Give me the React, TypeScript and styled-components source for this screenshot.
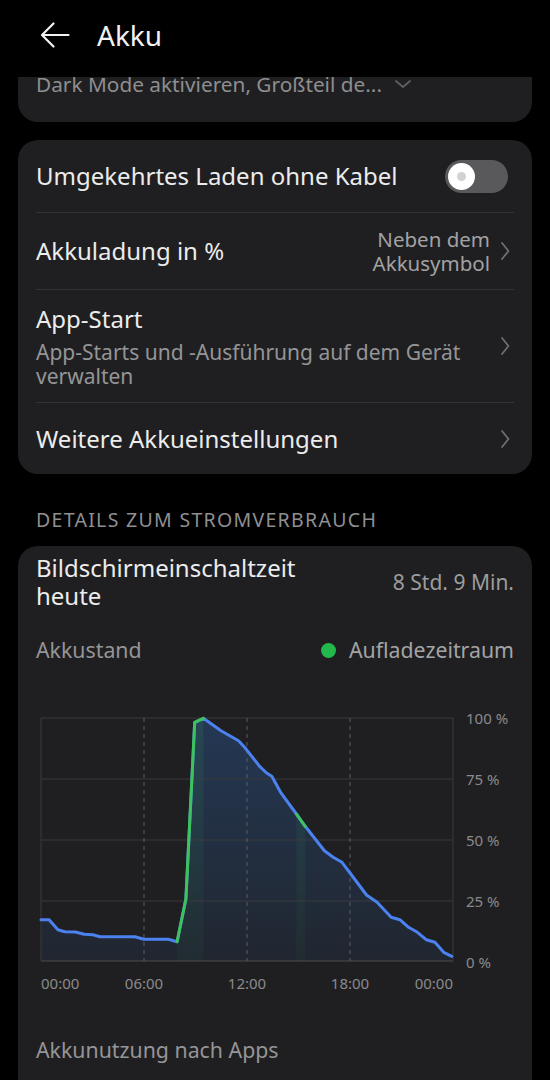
import React from "react";
import styled, { createGlobalStyle } from "styled-components";

const GlobalStyle = createGlobalStyle`
  html, body {
    margin: 0;
    padding: 0;
    background: #000;
  }
  body {
    font-family: "Noto Sans", "Liberation Sans", sans-serif;
    color: #e8e8e8;
    -webkit-font-smoothing: antialiased;
  }
  * {
    box-sizing: border-box;
  }
`;

const Page = styled.div`
  width: 550px;
  height: 1080px;
  overflow: hidden;
  background: #000;
`;

const Header = styled.header`
  height: 77px;
  display: flex;
  align-items: center;
  gap: 27px;
  padding: 0 0 7px 40px;
  background: #000;
`;

const HeaderTitle = styled.h1`
  margin: 0;
  font-size: 28px;
  font-weight: 400;
  color: #f2f2f2;
  line-height: 36px;
`;

const Content = styled.main`
  padding: 0 18px;
`;

const CollapsedCard = styled.div`
  height: 45px;
  overflow: hidden;
  background: #1f1f21;
  border-radius: 0 0 20px 20px;
  padding: 0 18px;
`;

const CollapsedLine = styled.div`
  margin-top: -7px;
  display: flex;
  align-items: center;
  gap: 12px;
  height: 28px;
  font-size: 20.8px;
  color: #8e8e90;
`;

const Card = styled.section<{ $top?: number }>`
  margin-top: ${(p) => p.$top ?? 18}px;
  background: #1f1f21;
  border-radius: 20px;
  padding: 0 18px;
`;

const Row = styled.div`
  display: flex;
  align-items: center;
  gap: 10px;
  min-height: 72px;
  padding: 14px 0;

  & + & {
    border-top: 1px solid #333335;
  }
`;

const RowMain = styled.div`
  flex: 1;
  display: flex;
  flex-direction: column;
  gap: 6px;
  min-width: 0;
`;

const RowTitle = styled.div`
  font-size: 24px;
  line-height: 30px;
  color: #ececec;
`;

const RowSub = styled.div`
  font-size: 21px;
  line-height: 24px;
  color: #959597;
`;

const RowValue = styled.div`
  font-size: 20.5px;
  line-height: 24px;
  color: #a2a2a4;
  text-align: right;
`;

const Toggle = styled.div`
  width: 63px;
  height: 33px;
  border-radius: 17px;
  background: #59595b;
  padding: 3px;
  flex-shrink: 0;
  margin-right: 6px;
`;

const Knob = styled.div`
  width: 27px;
  height: 27px;
  border-radius: 50%;
  background: #fff;
  display: flex;
  align-items: center;
  justify-content: center;

  &::after {
    content: "";
    width: 9px;
    height: 9px;
    border-radius: 50%;
    background: #d2d2d2;
  }
`;

const Chevron = styled.svg`
  flex-shrink: 0;
  margin-right: 4px;
`;

const SectionTitle = styled.h2`
  margin: 33px 18px 13px;
  font-size: 19.5px;
  font-weight: 400;
  line-height: 26px;
  color: #8f8f91;
  letter-spacing: 1.3px;
`;

const StatRow = styled.div`
  display: flex;
  align-items: center;
  justify-content: space-between;
  padding-top: 8px;
`;

const StatTitle = styled.div`
  max-width: 300px;
  font-size: 24px;
  line-height: 28px;
  color: #ececec;
`;

const StatValue = styled.div`
  font-size: 21px;
  color: #9c9c9e;
`;

const LegendRow = styled.div`
  display: flex;
  align-items: center;
  justify-content: space-between;
  margin-top: 26px;
  font-size: 21.3px;
  line-height: 28px;
  color: #959597;
`;

const Legend = styled.div`
  display: flex;
  align-items: center;
  gap: 13px;
  color: #a4a4a6;
`;

const Dot = styled.span`
  width: 15px;
  height: 15px;
  border-radius: 50%;
  background: #22b84c;
`;

const ChartSvg = styled.svg`
  display: block;
  margin-top: 35px;
  overflow: visible;
`;

const FooterLabel = styled.div`
  margin-top: 37px;
  padding-bottom: 40px;
  font-size: 21.3px;
  line-height: 28px;
  color: #959597;
`;

const BackArrow = () => (
  <svg width="30" height="26" viewBox="0 0 30 26" fill="none">
    <path
      d="M28.5 13H2M13.5 1.5L2 13l11.5 11.5"
      stroke="#f2f2f2"
      strokeWidth="2.2"
      strokeLinecap="round"
      strokeLinejoin="round"
    />
  </svg>
);

const ChevronRight = () => (
  <Chevron width="10" height="20" viewBox="0 0 10 20" fill="none">
    <path d="M2 2l6.5 8L2 18" stroke="#6f6f71" strokeWidth="1.8" strokeLinecap="round" strokeLinejoin="round" />
  </Chevron>
);

const ChevronDown = () => (
  <svg width="18" height="12" viewBox="0 0 18 12" fill="none">
    <path d="M2 3l7 6 7-6" stroke="#5f5f61" strokeWidth="1.8" strokeLinecap="round" strokeLinejoin="round" />
  </svg>
);

// chart points in svg coords (plot 5..417 x 19..262)
const points: [number, number][] = [
  [5, 220.7], [13.1, 220.7], [21.9, 230.7], [28.9, 232.7], [39.4, 233], [48.2, 235.3],
  [56.9, 235.7], [64, 237.7], [99, 237.7], [107.8, 240.3], [132.4, 240.3], [141.1, 242.7],
  [149.9, 200], [158.7, 23.3], [167.4, 19.3], [185, 31.7], [202.5, 41.7], [209.5, 49.3],
  [223.6, 67.3], [230.6, 74], [235.8, 77.3], [244.6, 93.3], [260.4, 115], [269.2, 127.3],
  [288.4, 151.7], [297.2, 158.3], [306, 163.3], [314.8, 175], [330.5, 196], [341.1, 203.3],
  [355.1, 218.3], [363.9, 220.7], [372.6, 228.3], [381.4, 233.3], [390.2, 240.7],
  [398.9, 243.3], [407.7, 253.3], [415.8, 257.3],
];

const charging: [number, number][] = [
  [11, 14],
  [22, 23],
];

const toPath = (pts: [number, number][]) =>
  pts.map(([x, y], i) => `${i ? "L" : "M"}${x} ${y}`).join(" ");

const BatteryChart = () => {
  const areaPath = `${toPath(points)} L415.8 262 L5 262 Z`;
  const yLabels = ["100 %", "75 %", "50 %", "25 %", "0 %"];
  const gridY = [19, 80, 141, 202];
  const xLabels = [
    { t: "00:00", x: 5, a: "start" },
    { t: "06:00", x: 108, a: "middle" },
    { t: "12:00", x: 211, a: "middle" },
    { t: "18:00", x: 314, a: "middle" },
    { t: "00:00", x: 417, a: "end" },
  ];

  return (
    <ChartSvg width="478" height="300" viewBox="0 0 478 300">
      <defs>
        <linearGradient id="areaFill" x1="0" y1="0" x2="0" y2="1">
          <stop offset="0" stopColor="#2b5a9a" stopOpacity="0.42" />
          <stop offset="1" stopColor="#2b5a9a" stopOpacity="0.12" />
        </linearGradient>
        <linearGradient id="chargeFill" x1="0" y1="0" x2="0" y2="1">
          <stop offset="0" stopColor="#35b85a" stopOpacity="0.13" />
          <stop offset="1" stopColor="#35b85a" stopOpacity="0.04" />
        </linearGradient>
        <clipPath id="areaClip">
          <path d={areaPath} />
        </clipPath>
      </defs>

      <path d={areaPath} fill="url(#areaFill)" />
      <g clipPath="url(#areaClip)">
        {charging.map(([a, b]) => (
          <rect
            key={a}
            x={points[a][0]}
            y={0}
            width={points[b][0] - points[a][0]}
            height={262}
            fill="url(#chargeFill)"
          />
        ))}
      </g>

      {gridY.map((y) => (
        <line key={y} x1="5" x2="417" y1={y} y2={y} stroke="#3b3b3e" strokeWidth="1" />
      ))}
      <line x1="5" x2="417" y1="262" y2="262" stroke="#4c4c4f" strokeWidth="1.2" />
      <line x1="5" x2="5" y1="19" y2="262" stroke="#3b3b3e" strokeWidth="1" />
      <line x1="417" x2="417" y1="19" y2="262" stroke="#3b3b3e" strokeWidth="1" />
      {[108, 211, 314].map((x) => (
        <line key={x} x1={x} x2={x} y1="19" y2="262" stroke="#5c5c5f" strokeWidth="1" strokeDasharray="4 4" />
      ))}

      <path d={toPath(points)} fill="none" stroke="#4b82f0" strokeWidth="3" strokeLinejoin="round" strokeLinecap="round" />
      {charging.map(([a, b]) => (
        <path
          key={a}
          d={toPath(points.slice(a, b + 1))}
          fill="none"
          stroke="#3dc25d"
          strokeWidth="3"
          strokeLinejoin="round"
          strokeLinecap="round"
        />
      ))}

      {yLabels.map((t, i) => (
        <text
          key={t}
          x="430"
          y={19 + i * 61}
          dominantBaseline="central"
          fontSize="15"
          fill="#8a8a8c"
          fontFamily="Noto Sans, sans-serif"
        >
          {t}
        </text>
      ))}
      {xLabels.map((l, i) => (
        <text
          key={i}
          x={l.x}
          y="284"
          textAnchor={l.a as "start" | "middle" | "end"}
          dominantBaseline="central"
          fontSize="15"
          fill="#8a8a8c"
          fontFamily="Noto Sans, sans-serif"
        >
          {l.t}
        </text>
      ))}
    </ChartSvg>
  );
};

const App: React.FC = () => {
  return (
    <Page>
      <GlobalStyle />
      <Header>
        <BackArrow />
        <HeaderTitle>Akku</HeaderTitle>
      </Header>

      <Content>
        <CollapsedCard>
          <CollapsedLine>
            <span>Dark Mode aktivieren, Großteil de...</span>
            <ChevronDown />
          </CollapsedLine>
        </CollapsedCard>

        <Card>
          <Row>
            <RowMain>
              <RowTitle>Umgekehrtes Laden ohne Kabel</RowTitle>
            </RowMain>
            <Toggle>
              <Knob />
            </Toggle>
          </Row>
          <Row>
            <RowMain>
              <RowTitle>Akkuladung in %</RowTitle>
            </RowMain>
            <RowValue>
              Neben dem
              <br />
              Akkusymbol
            </RowValue>
            <ChevronRight />
          </Row>
          <Row>
            <RowMain>
              <RowTitle>App-Start</RowTitle>
              <RowSub>App-Starts und -Ausführung auf dem Gerät verwalten</RowSub>
            </RowMain>
            <ChevronRight />
          </Row>
          <Row>
            <RowMain>
              <RowTitle>Weitere Akkueinstellungen</RowTitle>
            </RowMain>
            <ChevronRight />
          </Row>
        </Card>

        <SectionTitle>DETAILS ZUM STROMVERBRAUCH</SectionTitle>

        <Card $top={0}>
          <StatRow>
            <StatTitle>Bildschirmeinschaltzeit heute</StatTitle>
            <StatValue>8 Std. 9 Min.</StatValue>
          </StatRow>
          <LegendRow>
            <span>Akkustand</span>
            <Legend>
              <Dot />
              Aufladezeitraum
            </Legend>
          </LegendRow>
          <BatteryChart />
          <FooterLabel>Akkunutzung nach Apps</FooterLabel>
        </Card>
      </Content>
    </Page>
  );
};

export default App;
